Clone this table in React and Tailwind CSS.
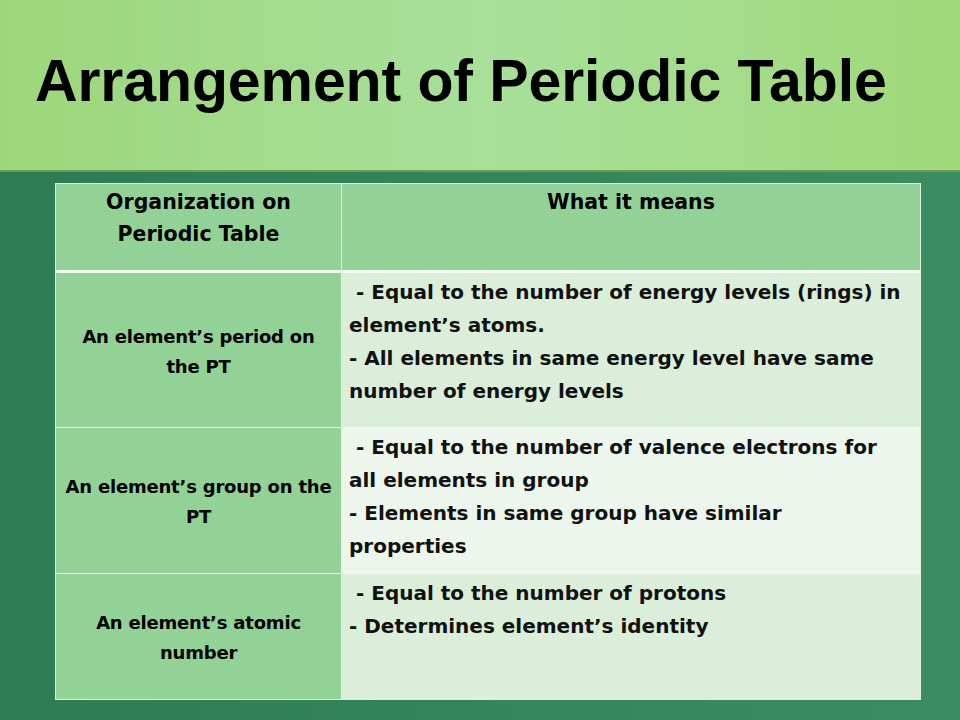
import React from 'react';

const rows = [
  {
    label: ['An element’s period on', 'the PT'],
    bg: 'bg-[#daeeda]',
    h: 'h-[155px]',
    lines: [
      '\u00a0- Equal to the number of energy levels (rings) in',
      'element’s atoms.',
      '- All elements in same energy level have same',
      'number of energy levels',
    ],
  },
  {
    label: ['An element’s group on the', 'PT'],
    bg: 'bg-[#ecf6ec]',
    h: 'h-[146px]',
    lines: [
      '\u00a0- Equal to the number of valence electrons for',
      'all elements in group',
      '- Elements in same group have similar',
      'properties',
    ],
  },
  {
    label: ['An element’s atomic', 'number'],
    bg: 'bg-[#daeeda]',
    h: 'h-[125px]',
    lines: ['\u00a0- Equal to the number of protons', '- Determines element’s identity'],
  },
];

const cellFont = { fontFamily: '"DejaVu Sans", "Liberation Sans", sans-serif' };

const App = () => {
  return (
    <div
      className="w-[960px] h-[720px] overflow-hidden flex flex-col bg-gradient-to-r from-[#2e7b54] via-[#348559] to-[#3c8c62]"
      style={{ fontFamily: '"Liberation Sans", Arial, sans-serif' }}
    >
      {/* Title band */}
      <div className="h-[172px] shrink-0 border-b-2 border-[#6f9a52] bg-gradient-to-r from-[#9dd67a] via-[#a8e09a] to-[#a0d87a] pl-[35px] pt-[52px]">
        <h1 className="text-[59px] leading-none font-bold text-black tracking-[-0.1px]">
          Arrangement of Periodic Table
        </h1>
      </div>

      {/* Table */}
      <div className="pl-[55px] pt-[11px]" style={cellFont}>
        <div className="w-[866px] border border-[#dff0df] text-black">
          <div className="flex h-[89px] border-b-[3px] border-[#f2faf2]">
            <div className="w-[286px] shrink-0 bg-[#92d296] border-r border-[#e6f4e6] pt-[2px] text-center text-[20.5px] font-bold leading-[32px]">
              <div>Organization on</div>
              <div>Periodic Table</div>
            </div>
            <div className="flex-1 bg-[#92d296] pt-[2px] text-center text-[20.5px] font-bold leading-[32px]">
              What it means
            </div>
          </div>
          {rows.map((row, i) => (
            <div
              key={i}
              className={`flex ${row.h} ${i < rows.length - 1 ? 'border-b border-[#f2faf2]' : ''}`}
            >
              <div className="w-[286px] shrink-0 bg-[#92d296] border-r border-[#e6f4e6] flex flex-col justify-center items-center text-[18px] font-bold leading-[30px] pt-[3px] tracking-[-0.2px]">
                {row.label.map((t, j) => (
                  <div key={j} className="whitespace-nowrap">{t}</div>
                ))}
              </div>
              <div className={`flex-1 ${row.bg} pl-[7px] pt-[3px] text-[20px] font-bold leading-[33px] text-[#111]`}>
                {row.lines.map((t, j) => (
                  <div key={j} className="whitespace-nowrap">
                    {t}
                  </div>
                ))}
              </div>
            </div>
          ))}
        </div>
      </div>
    </div>
  );
};

export default App;
